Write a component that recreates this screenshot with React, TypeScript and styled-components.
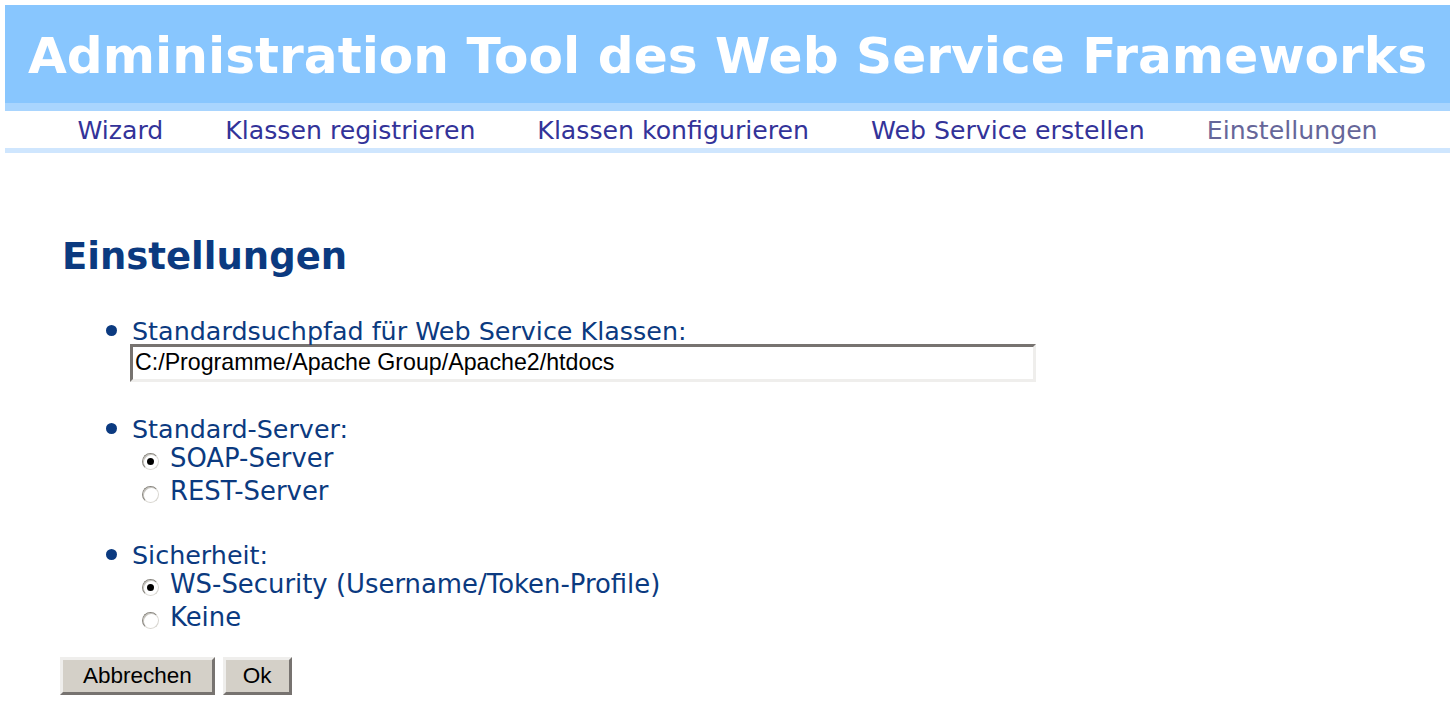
import React from "react";
import styled, { createGlobalStyle } from "styled-components";

const Global = createGlobalStyle`
  html, body { margin: 0; padding: 0; background: #fff; }
  body { padding: 5px; font-family: "DejaVu Sans", Verdana, sans-serif; }
`;

const Header = styled.header`
  background: #88c6fe;
  border-bottom: 8px solid #a9d5fe;
  height: 98px;
  display: flex;
  align-items: center;
  justify-content: center;
`;

const Title = styled.h1`
  margin: 0;
  color: #fff;
  font-family: "DejaVu Sans", Verdana, sans-serif;
  font-weight: bold;
  font-size: 50.2px;
  line-height: 1;
  padding-top: 4px;
`;

const Nav = styled.nav`
  display: flex;
  justify-content: center;
  gap: 62px;
  height: 37px;
  align-items: center;
  border-bottom: 5px solid #cfe6fe;
`;

const NavLink = styled.a<{ $active?: boolean }>`
  font-size: 25.2px;
  color: ${(p) => (p.$active ? "#666699" : "#333399")};
  text-decoration: none;
  line-height: 1;
  padding-top: 3px;
`;

const Main = styled.main`
  padding: 84px 0 0 55px;
`;

const Heading = styled.h2`
  margin: 0 0 38px 2px;
  font-size: 37px;
  font-weight: bold;
  color: #0b3a80;
  line-height: 1.1;
`;

const List = styled.ul`
  margin: 0;
  padding: 0 0 0 72px;
  list-style: none;
  display: flex;
  flex-direction: column;
  gap: 32px;
`;

const Item = styled.li`
  position: relative;
  color: #0b3a80;
  font-size: 25.4px;
  &::before {
    content: "";
    position: absolute;
    left: -26px;
    top: 9px;
    width: 11px;
    height: 11px;
    border-radius: 50%;
    background: #0b3a80;
  }
`;

const Label = styled.div`
  line-height: 30px;
`;

const TextField = styled.div`
  width: 898px;
  height: 32px;
  border: 3px solid;
  border-color: #777370 #efeeec #efeeec #777370;
  display: flex;
  align-items: center;
  padding-left: 2px;
  font-family: "Liberation Sans", Arial, sans-serif;
  font-size: 23.2px;
  color: #000;
  margin-left: -2px;
  margin-top: -2px;
`;

const Options = styled.div`
  padding-left: 10px;
  margin-top: -2px;
  display: flex;
  flex-direction: column;
  font-size: 25.9px;
`;

const Option = styled.label`
  display: flex;
  align-items: center;
  gap: 11px;
  line-height: 33px;
`;

const Radio = styled.span<{ $checked?: boolean }>`
  width: 17px;
  height: 17px;
  box-sizing: border-box;
  border-radius: 50%;
  border: 1px solid;
  border-color: #8a8780 #d8d6d0 #d8d6d0 #8a8780;
  box-shadow: inset 1px 1px 0 #c8c6c0;
  background: #fff;
  margin-top: 7px;
  display: flex;
  align-items: center;
  justify-content: center;
  &::after {
    content: "";
    width: 7px;
    height: 7px;
    border-radius: 50%;
    background: #000;
    display: ${(p) => (p.$checked ? "block" : "none")};
  }
`;

const Buttons = styled.div`
  display: flex;
  gap: 8px;
  margin-top: 23px;
`;

const Button = styled.button<{ $pad: number }>`
  height: 38px;
  box-sizing: border-box;
  border: 3px solid;
  border-color: #efeeec #777370 #777370 #efeeec;
  background: #d4d0c8;
  font-family: "Liberation Sans", Arial, sans-serif;
  font-size: 22.5px;
  color: #000;
  padding: 0 ${(p) => p.$pad}px;
  margin: 0;
`;

export default function App() {
  return (
    <>
      <Global />
      <Header>
        <Title>Administration Tool des Web Service Frameworks</Title>
      </Header>
      <Nav>
        <NavLink>Wizard</NavLink>
        <NavLink>Klassen registrieren</NavLink>
        <NavLink>Klassen konfigurieren</NavLink>
        <NavLink>Web Service erstellen</NavLink>
        <NavLink $active>Einstellungen</NavLink>
      </Nav>
      <Main>
        <Heading>Einstellungen</Heading>
        <List>
          <Item>
            <Label>Standardsuchpfad für Web Service Klassen:</Label>
            <TextField>C:/Programme/Apache Group/Apache2/htdocs</TextField>
          </Item>
          <Item>
            <Label>Standard-Server:</Label>
            <Options>
              <Option><Radio $checked />SOAP-Server</Option>
              <Option><Radio />REST-Server</Option>
            </Options>
          </Item>
          <Item>
            <Label>Sicherheit:</Label>
            <Options>
              <Option><Radio $checked />WS-Security (Username/Token-Profile)</Option>
              <Option><Radio />Keine</Option>
            </Options>
          </Item>
        </List>
        <Buttons>
          <Button $pad={20}>Abbrechen</Button>
          <Button $pad={17}>Ok</Button>
        </Buttons>
      </Main>
    </>
  );
}
